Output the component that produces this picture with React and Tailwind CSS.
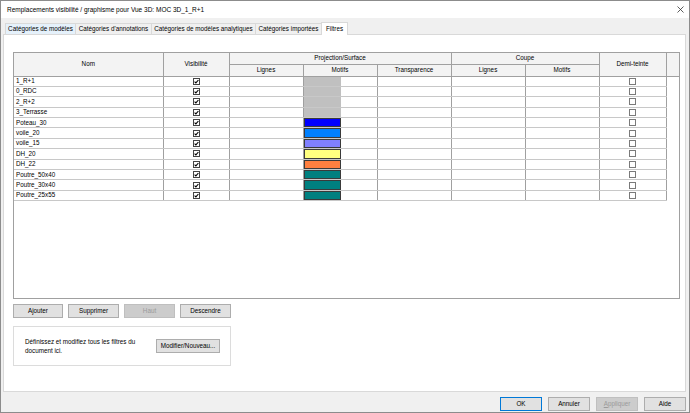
import React from "react";

const rows = [
  ["1_R+1", "#c0c0c0"],
  ["0_RDC", "#c0c0c0"],
  ["2_R+2", "#c0c0c0"],
  ["3_Terrasse", "#c0c0c0"],
  ["Poteau_30", "#0000ff"],
  ["voile_20", "#0080ff"],
  ["voile_15", "#8080ff"],
  ["DH_20", "#ffff80"],
  ["DH_22", "#ff8040"],
  ["Poutre_50x40", "#008080"],
  ["Poutre_30x40", "#008080"],
  ["Poutre_25x55", "#008080"],
];

function Checked() {
  return (
    <svg width="7" height="7" viewBox="0 0 7 7" className="block mx-auto">
      <rect x="0.5" y="0.5" width="6" height="6" fill="#fff" stroke="#444" />
      <path d="M1.6 3.6 L2.9 4.9 L5.4 2" fill="none" stroke="#000" strokeWidth="1.1" />
    </svg>
  );
}

function Unchecked() {
  return (
    <svg width="7" height="7" viewBox="0 0 7 7" className="block mx-auto">
      <rect x="0.5" y="0.5" width="6" height="6" fill="#fff" stroke="#7a7a7a" />
    </svg>
  );
}

function Btn({ children, disabled, primary, w = "w-[51px]" }) {
  return (
    <div
      className={`${w} h-[14px] flex items-center justify-center ${
        disabled
          ? "bg-[#cccccc] border border-[#bfbfbf] text-[#9a9a9a]"
          : primary
          ? "bg-[#e1e1e1] border-[1.5px] border-[#0078d7] text-black"
          : "bg-[#e1e1e1] border border-[#adadad] text-black"
      }`}
    >
      {children}
    </div>
  );
}

export default function App() {
  const th = "border-r border-b border-[#a0a0a0] bg-[#f3f3f3] font-normal p-0 leading-none text-center";
  const td = "border-r border-[#a0a0a0] border-b border-b-[#c8c8c8] p-0 leading-none";
  return (
    <div className="w-[690px] h-[413px] bg-[#f0f0f0] border border-[#8c8c8c] overflow-hidden flex flex-col font-['Liberation_Sans',Arial,sans-serif] text-[6.3px] text-black">
      {/* title bar */}
      <div className="h-[17px] bg-white flex items-center justify-between pl-[6px] pr-[5px] shrink-0">
        <span className="text-[6.5px]">Remplacements visibilité / graphisme pour Vue 3D: MOC 3D_1_R+1</span>
        <svg width="7" height="7" viewBox="0 0 7 7">
          <path d="M0.5 0.5 L6.5 6.5 M6.5 0.5 L0.5 6.5" stroke="#333" strokeWidth="0.8" />
        </svg>
      </div>
      {/* tabs */}
      <div className="flex items-end pl-[4px] h-[16px] shrink-0">
        <div className="h-[11px] w-[71px] flex items-center justify-center bg-[#e5f1fb] border border-[#d9d9d9] border-b-0">Catégories de modèles</div>
        <div className="h-[11px] w-[76px] flex items-center justify-center border-t border-r border-[#d9d9d9]">Catégories d'annotations</div>
        <div className="h-[11px] w-[104px] flex items-center justify-center border-t border-r border-[#d9d9d9]">Catégories de modèles analytiques</div>
        <div className="h-[11px] w-[65px] flex items-center justify-center border-t border-[#d9d9d9]">Catégories importées</div>
        <div className="h-[13px] w-[27px] flex items-center justify-center bg-white border border-[#d9d9d9] border-b-0 relative top-[1px]">Filtres</div>
      </div>
      {/* panel */}
      <div className="ml-[2px] w-[683px] h-[358px] bg-white border border-[#d9d9d9] pl-[9px] pt-[17px] shrink-0 flex flex-col">
        <div className="w-[667px] h-[247px] border border-[#a0a0a0] bg-white overflow-hidden">
          <table className="border-collapse table-fixed w-[665px]">
            <colgroup>
              <col className="w-[149px]" />
              <col className="w-[66px]" />
              <col className="w-[74px]" />
              <col className="w-[74px]" />
              <col className="w-[74px]" />
              <col className="w-[74px]" />
              <col className="w-[74px]" />
              <col className="w-[67px]" />
              <col className="w-[13px]" />
            </colgroup>
            <thead>
              <tr className="h-[11.5px]">
                <th rowSpan={2} className={th}>Nom</th>
                <th rowSpan={2} className={th}>Visibilité</th>
                <th colSpan={3} className={th}>Projection/Surface</th>
                <th colSpan={2} className={th}>Coupe</th>
                <th rowSpan={2} className={th}>Demi-teinte</th>
                <th rowSpan={2} className="border-b border-[#a0a0a0] bg-[#f3f3f3] p-0"></th>
              </tr>
              <tr className="h-[11.5px]">
                <th className={th}>Lignes</th>
                <th className={th}>Motifs</th>
                <th className={th}>Transparence</th>
                <th className={th}>Lignes</th>
                <th className={th}>Motifs</th>
              </tr>
            </thead>
            <tbody>
              {rows.map(([name, color], i) => (
                <tr key={name} className="h-[10.4px]">
                  <td className={`${td} pl-[2px] text-left`}>{name}</td>
                  <td className={td}><Checked /></td>
                  <td className={td}></td>
                  <td className={`${td} align-top`}>
                    <div
                      className={`w-[37px] h-[9.4px] ${color === "#c0c0c0" ? "" : "border border-[#3a3a3a]"}`}
                      style={{ backgroundColor: color }}
                    />
                  </td>
                  <td className={td}></td>
                  <td className={td}></td>
                  <td className={td}></td>
                  <td className={td}><Unchecked /></td>
                </tr>
              ))}
            </tbody>
          </table>
        </div>
        <div className="flex gap-[5px] mt-[5px]">
          <Btn w="w-[50px]">Ajouter</Btn>
          <Btn>Supprimer</Btn>
          <Btn disabled>Haut</Btn>
          <Btn>Descendre</Btn>
        </div>
        <div className="mt-[8px] w-[218px] h-[40px] border border-[#dcdcdc] flex items-center pl-[11px] pr-[10px] justify-between">
          <div className="leading-[9px] w-[125px]">
            Définissez et modifiez tous les filtres du document ici.
          </div>
          <Btn w="w-[64px]">Modifier/Nouveau...</Btn>
        </div>
      </div>
      {/* bottom buttons */}
      <div className="flex justify-end gap-[6px] pr-[3px] mt-[5px]">
        <Btn primary w="w-[42px]">OK</Btn>
        <Btn w="w-[42px]">Annuler</Btn>
        <Btn disabled w="w-[42px]"><span className="underline">A</span>ppliquer</Btn>
        <Btn w="w-[42px]">Aide</Btn>
      </div>
    </div>
  );
}
